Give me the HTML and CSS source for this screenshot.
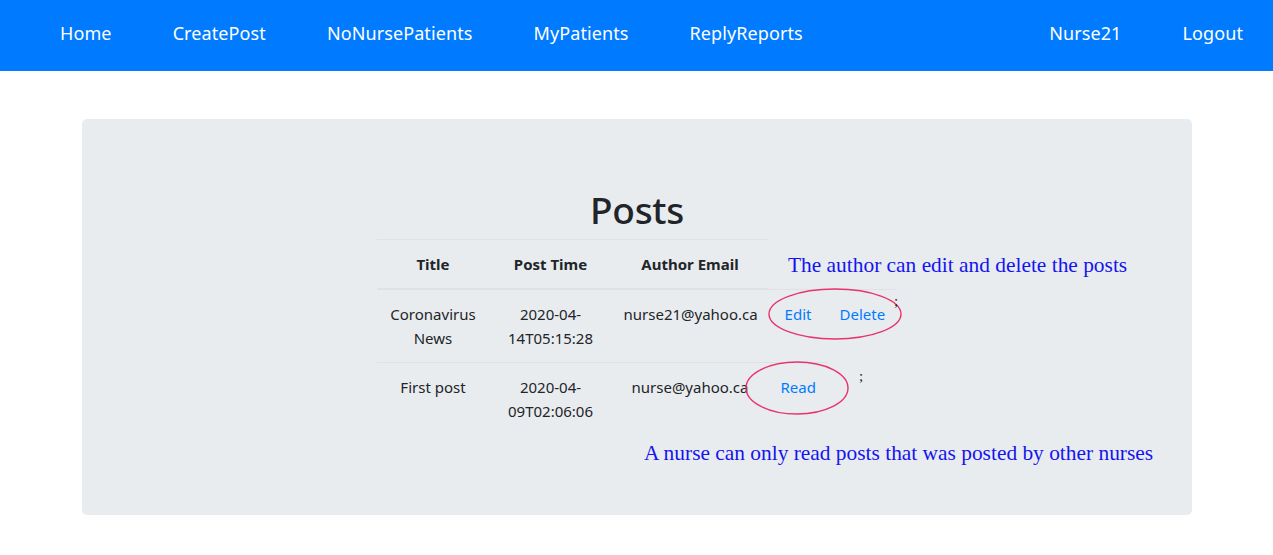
FILE: index.html
```html
<!DOCTYPE html>
<html lang="en">
<head>
<meta charset="utf-8">
<title>Posts</title>
<link rel="stylesheet" href="styles.css">
</head>
<body>
<nav class="navbar">
  <div class="nav-left">
    <a class="nav-link" href="#">Home</a>
    <a class="nav-link" href="#">CreatePost</a>
    <a class="nav-link" href="#">NoNursePatients</a>
    <a class="nav-link" href="#">MyPatients</a>
    <a class="nav-link" href="#">ReplyReports</a>
  </div>
  <div class="nav-right">
    <a class="nav-link" href="#">Nurse21</a>
    <a class="nav-link" href="#">Logout</a>
  </div>
</nav>
<main class="container">
  <section class="jumbotron">
    <h1 class="title">Posts</h1>
    <table class="posts">
      <colgroup>
        <col class="c-title"><col class="c-time"><col class="c-email"><col class="c-act1"><col class="c-act2">
      </colgroup>
      <thead>
        <tr><th>Title</th><th>Post Time</th><th>Author Email</th></tr>
      </thead>
      <tbody>
        <tr>
          <td>Coronavirus News</td>
          <td>2020-04-14T05:15:28</td>
          <td>nurse21@yahoo.ca</td>
          <td><a href="#">Edit</a></td>
          <td><a href="#">Delete</a></td>
        </tr>
        <tr>
          <td>First post</td>
          <td>2020-04-09T02:06:06</td>
          <td>nurse@yahoo.ca</td>
          <td><a href="#">Read</a></td>
        </tr>
      </tbody>
    </table>
    <div class="annotations">
      <svg class="marks" width="1110" height="396" viewBox="0 0 1110 396">
        <ellipse cx="753" cy="195" rx="66" ry="25" />
        <ellipse cx="715" cy="269" rx="51" ry="26" />
      </svg>
      <span class="semi semi-1">;</span>
      <span class="semi semi-2">;</span>
      <p class="note note-1">The author can edit and delete the posts</p>
      <p class="note note-2">A nurse can only read posts that was posted by other nurses</p>
    </div>
  </section>
</main>
</body>
</html>
```
FILE: styles.css
```css
* { box-sizing: border-box; }
html, body { margin: 0; padding: 0; }
body {
  font-family: "Noto Sans", "Open Sans", sans-serif;
  font-size: 15px;
  line-height: 1.6;
  color: #212529;
  background: #fff;
}
.navbar {
  height: 71px;
  background: #007bff;
  display: flex;
  align-items: center;
  justify-content: space-between;
  padding: 0 30px 0 60px;
}
.nav-left, .nav-right {
  display: flex;
  gap: 61px;
}
.nav-link {
  color: #fff;
  text-decoration: none;
  font-size: 18px;
  line-height: 24px;
  letter-spacing: 0.1px;
  position: relative;
  top: -3px;
}
.container {
  padding: 48px 81px 0 82px;
}
.jumbotron {
  position: relative;
  width: 1110px;
  background: #e9ecef;
  border-radius: 5px;
  padding: 64px 32px;
}
.title {
  margin: 0 0 8px;
  text-align: center;
  font-size: 37px;
  font-weight: 500;
  line-height: 48px;
  letter-spacing: -0.3px;
  position: relative;
  top: 3px;
}
.posts {
  margin: 0 auto 16px;
  width: 519px;
  table-layout: fixed;
  border-collapse: collapse;
  position: relative;
  left: -1px;
}
.c-title { width: 113px; }
.c-time { width: 122px; }
.c-email { width: 157px; }
.c-act1 { width: 59px; }
.c-act2 { width: 68px; }
.posts th, .posts td {
  padding: 12px;
  text-align: center;
  border-top: 1px solid #dee2e6;
  line-height: 24px;
  vertical-align: top;
}
.posts th {
  font-weight: 700;
  vertical-align: bottom;
  border-bottom: 2px solid #dee2e6;
}
.posts td:nth-child(3) { white-space: nowrap; }
.posts a {
  color: #007bff;
  text-decoration: none;
}
.annotations {
  position: absolute;
  inset: 0;
  pointer-events: none;
}
.marks {
  position: absolute;
  left: 0;
  top: 0;
}
.marks ellipse {
  fill: none;
  stroke: #e8336b;
  stroke-width: 1.4;
}
.semi {
  position: absolute;
  font-family: "Liberation Serif", serif;
  font-size: 15px;
  line-height: 16px;
  color: #222;
}
.semi-1 { left: 812px; top: 174px; }
.semi-2 { left: 777px; top: 249px; }
.note {
  position: absolute;
  margin: 0;
  font-family: "Liberation Serif", serif;
  font-size: 21.4px;
  line-height: 24px;
  color: #1414f0;
  white-space: nowrap;
}
.note-1 { left: 706px; top: 134px; }
.note-2 { left: 562px; top: 322px; }
```
